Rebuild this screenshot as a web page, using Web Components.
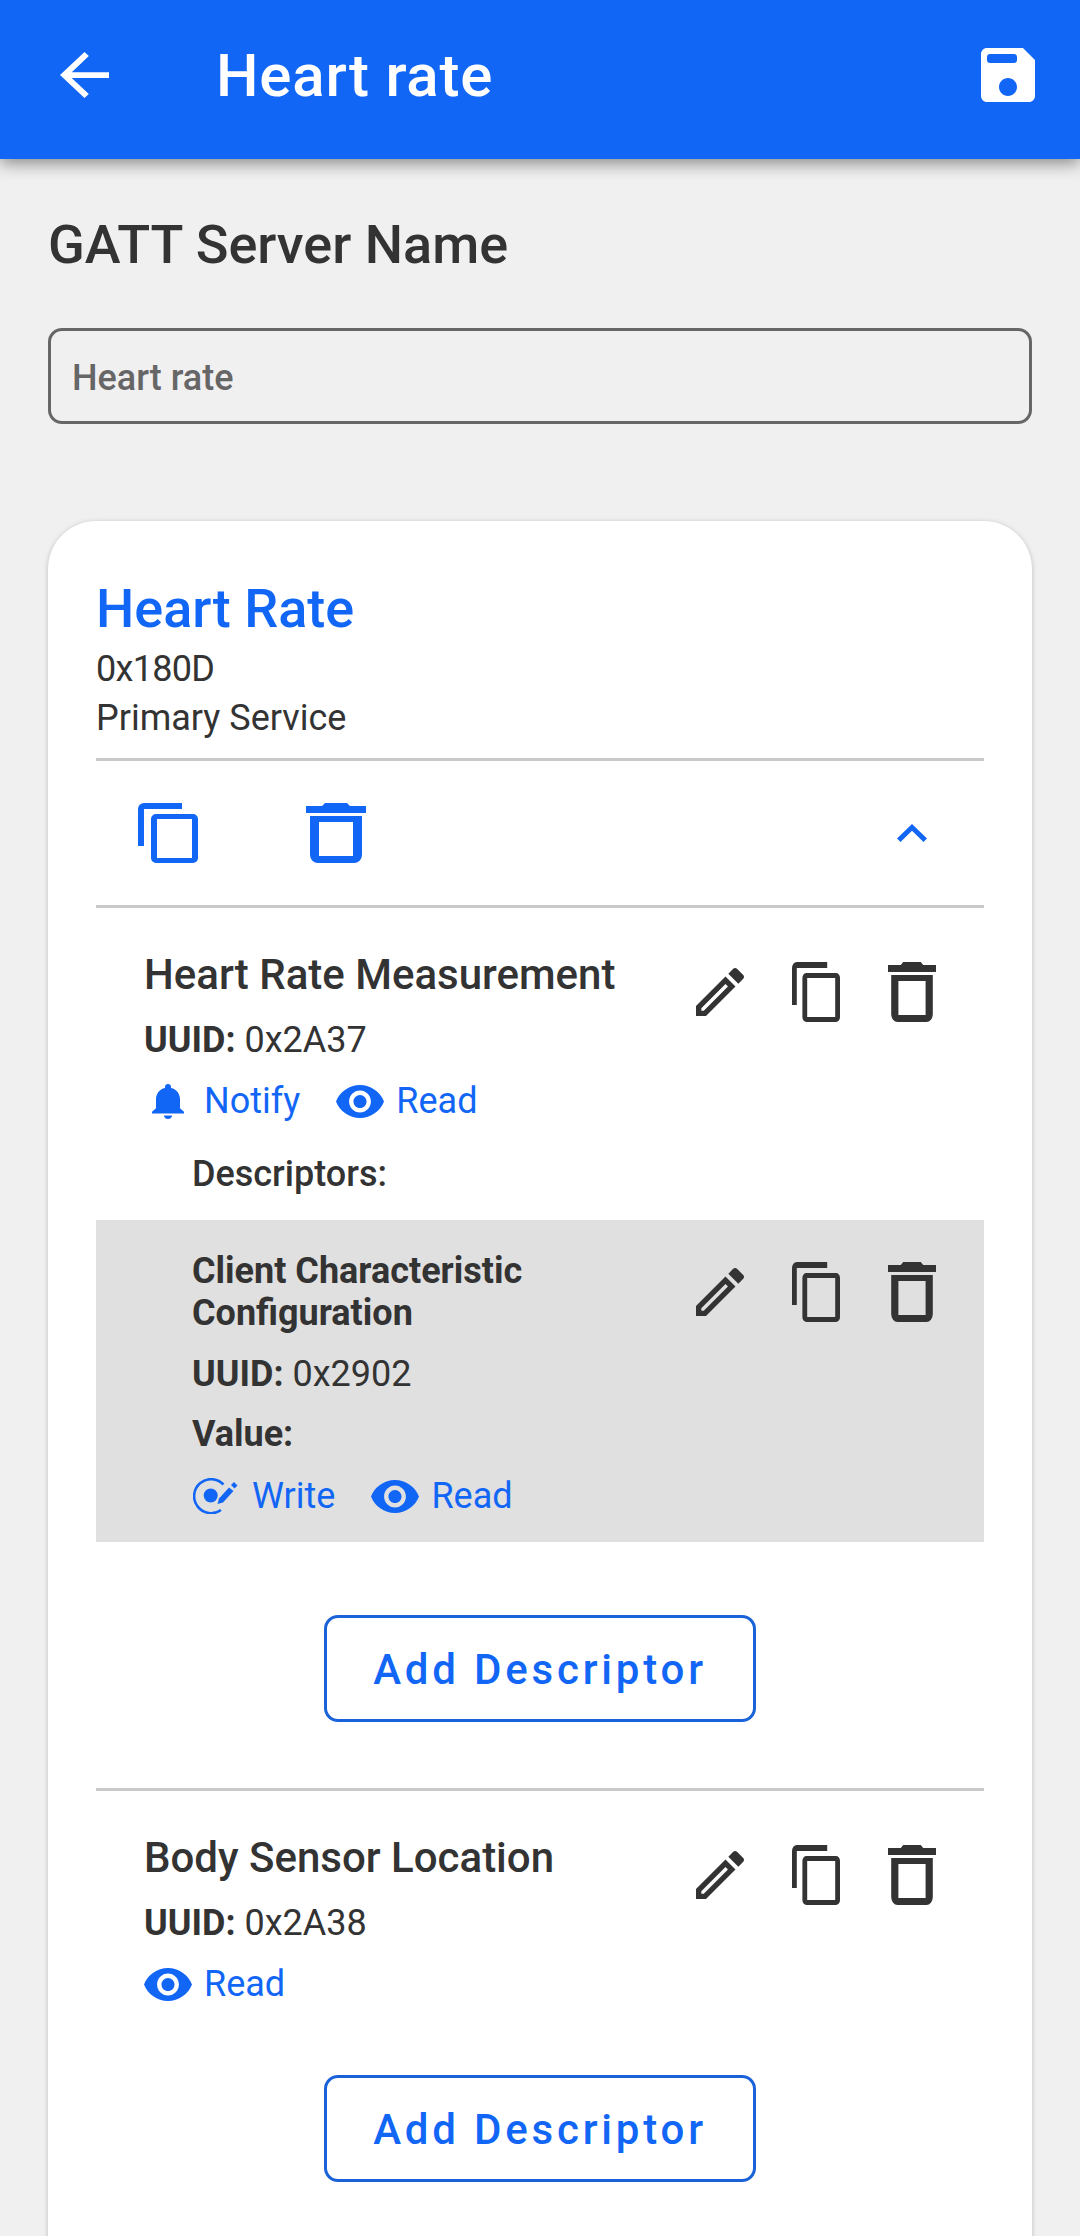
<!DOCTYPE html>
<html lang="en">
<head>
<meta charset="UTF-8">
<title>Heart rate</title>
<style>
html, body { margin: 0; height: 2236px; overflow: hidden; }
body {
  background: #f1f0f1;
  color: #333333;
  font-family: "Roboto", "Liberation Sans", sans-serif;
}
</style>
</head>
<body>
<app-bar>Heart rate</app-bar>
<server-name label="GATT Server Name">Heart rate</server-name>
<service-card>
  <span slot="name">Heart Rate</span>
  <span slot="uuid">0x180D</span>
  <span slot="kind">Primary Service</span>

  <gatt-char>
    <span slot="name">Heart Rate Measurement</span>
    <uuid-line slot="uuid">0x2A37</uuid-line>
    <prop-tag slot="props" icon="bell">Notify</prop-tag>
    <prop-tag slot="props" icon="eye">Read</prop-tag>
    <gatt-desc slot="descriptors">
      <span slot="name">Client Characteristic Configuration</span>
      <uuid-line slot="uuid">0x2902</uuid-line>
      <prop-tag slot="props" icon="write">Write</prop-tag>
      <prop-tag slot="props" icon="eye">Read</prop-tag>
    </gatt-desc>
  </gatt-char>

  <gatt-char last>
    <span slot="name">Body Sensor Location</span>
    <uuid-line slot="uuid">0x2A38</uuid-line>
    <prop-tag slot="props" icon="eye">Read</prop-tag>
  </gatt-char>
</service-card>

<script>
const ICONS = {
  back: { box: "4 4 16 16", d: "M20 11H7.83l5.59-5.59L12 4l-8 8 8 8 1.41-1.41L7.83 13H20v-2z" },
  save: { box: "3 3 18 18", d: "M17 3H5c-1.11 0-2 .9-2 2v14c0 1.1.89 2 2 2h14c1.1 0 2-.9 2-2V7l-4-4zM12 19c-1.66 0-3-1.34-3-3s1.34-3 3-3 3 1.34 3 3-1.34 3-3 3zM15 7c0 .6-.4 1-1 1H6c-.6 0-1-.4-1-1V6c0-.6.4-1 1-1h8c.6 0 1 .4 1 1v1z" },
  copy: { box: "0 0 60 60", d: "M44 0H6a6 6 0 0 0-6 6V43h6V6H44zM18 11H55a5 5 0 0 1 5 5V55a5 5 0 0 1-5 5H18a5 5 0 0 1-5-5V16a5 5 0 0 1 5-5zM19 16V55H54V16z" },
  trash: { box: "0 0 60 60", d: "M16 3L19 0H41L44 3H60V10H0V3zM4 13H56V52a8 8 0 0 1-8 8H12a8 8 0 0 1-8-8zM13 19V53H47V19z" },
  edit: { box: "3 3 18 18", d: "M3 17.25V21h3.75L17.81 9.94l-3.75-3.75L3 17.25zM5.92 19H5v-.92l9.06-9.06.92.92L5.92 19zM20.71 5.63l-2.34-2.34c-.2-.2-.45-.29-.71-.29s-.51.1-.7.29l-1.83 1.83 3.75 3.75 1.83-1.83c.39-.39.39-1.02 0-1.41z" },
  up: { box: "6 8 12 7.41", d: "M12 8l-6 6 1.41 1.41L12 10.83l4.59 4.58L18 14z" },
  bell: { box: "4 2.5 16 19.5", d: "M12 22c1.1 0 2-.9 2-2h-4c0 1.1.89 2 2 2zm6-6v-5c0-3.07-1.64-5.64-4.5-6.32V4c0-.83-.67-1.5-1.5-1.5s-1.5.67-1.5 1.5v.68C7.63 5.36 6 7.92 6 11v5l-2 2v1h16v-1l-2-2z" },
  eye: { box: "1 4.5 22 15", d: "M12 4.5C7 4.5 2.73 7.61 1 12c1.73 4.39 6 7.5 11 7.5s9.27-3.11 11-7.5c-1.73-4.39-6-7.5-11-7.5zM12 17c-2.76 0-5-2.24-5-5s2.24-5 5-5 5 2.24 5 5-2.24 5-5 5zm0-8c-1.66 0-3 1.34-3 3s1.34 3 3 3 3-1.34 3-3-1.34-3-3-3z" }
};

class UiIcon extends HTMLElement {
  connectedCallback() {
    const name = this.getAttribute("name");
    const w = this.getAttribute("w") || 48;
    const h = this.getAttribute("h") || 48;
    const style = `<style>:host { display: block; width: ${w}px; height: ${h}px; flex: none; } svg { display: block; width: 100%; height: 100%; fill: currentColor; }</style>`;
    const root = this.shadowRoot || this.attachShadow({ mode: "open" });
    if (name === "write") {
      root.innerHTML = style + `<svg viewBox="0 0 47 36" preserveAspectRatio="none">
        <path d="M30.5 6.5A17 17 0 1 0 28 32" fill="none" stroke="currentColor" stroke-width="2.6"/>
        <circle cx="17.7" cy="17.5" r="7"/>
        <path d="M24.5 26l1.5-5.5L36 9.5l4.5 3.5L30 24.5z"/>
        <path d="M38 7l3-3 3.5 3.5-3 3z"/>
      </svg>`;
    } else {
      const icon = ICONS[name];
      root.innerHTML = style + `<svg viewBox="${icon.box}" preserveAspectRatio="none"><path fill-rule="evenodd" d="${icon.d}"/></svg>`;
    }
  }
}
customElements.define("ui-icon", UiIcon);

const appBarTemplate = document.createElement("template");
appBarTemplate.innerHTML = `
<style>
:host {
  display: flex;
  align-items: center;
  position: relative;
  box-sizing: border-box;
  height: 159px;
  padding: 0 45px 9px 60px;
  background: #1266f6;
  color: #ffffff;
  box-shadow: 0 4px 16px rgba(0, 0, 0, 0.45);
}
.title {
  flex: 1;
  margin-left: 107px;
  padding-top: 2px;
  font-size: 60px;
  font-weight: 500;
  letter-spacing: 0.8px;
  line-height: 70px;
}
</style>
<ui-icon name="back" w="49" h="46"></ui-icon>
<div class="title"><slot></slot></div>
<ui-icon name="save" w="54" h="54"></ui-icon>
`;
customElements.define("app-bar", class extends HTMLElement {
  constructor() {
    super().attachShadow({ mode: "open" }).appendChild(appBarTemplate.content.cloneNode(true));
  }
});

const serverNameTemplate = document.createElement("template");
serverNameTemplate.innerHTML = `
<style>
:host { display: block; padding: 54px 48px 0; }
.label { font-size: 54px; font-weight: 500; line-height: 64px; color: #333333; }
.field {
  box-sizing: border-box;
  height: 96px;
  margin-top: 51px;
  padding-left: 21px;
  border: 3px solid #666666;
  border-radius: 14px;
  font-size: 36px;
  font-weight: 500;
  line-height: 94px;
  color: #666666;
}
</style>
<div class="label"></div>
<div class="field"><slot></slot></div>
`;
customElements.define("server-name", class extends HTMLElement {
  constructor() {
    super().attachShadow({ mode: "open" }).appendChild(serverNameTemplate.content.cloneNode(true));
  }
  connectedCallback() {
    this.shadowRoot.querySelector(".label").textContent = this.getAttribute("label");
  }
});

const serviceCardTemplate = document.createElement("template");
serviceCardTemplate.innerHTML = `
<style>
:host {
  display: block;
  margin: 97px 48px 0;
  padding: 56px 48px 0;
  background: #ffffff;
  border-radius: 48px;
  box-shadow: 0 1px 5px rgba(0, 0, 0, 0.22);
}
.name { font-size: 54px; font-weight: 500; line-height: 64px; color: #1266f6; }
.meta { font-size: 36px; line-height: 48px; color: #333333; }
.uuid { margin-top: 4px; letter-spacing: -0.7px; }
.kind { margin-top: 1px; }
.actions {
  display: flex;
  align-items: center;
  gap: 108px;
  height: 144px;
  margin-top: 16px;
  padding: 0 57px 0 42px;
  border-top: 3px solid #c9c9c9;
  border-bottom: 3px solid #c9c9c9;
  color: #1266f6;
}
.up { margin-left: auto; }
</style>
<div class="name"><slot name="name"></slot></div>
<div class="meta uuid"><slot name="uuid"></slot></div>
<div class="meta kind"><slot name="kind"></slot></div>
<div class="actions">
  <ui-icon name="copy" w="60" h="60"></ui-icon>
  <ui-icon name="trash" w="60" h="60"></ui-icon>
  <ui-icon class="up" name="up" w="30" h="18"></ui-icon>
</div>
<slot></slot>
`;
customElements.define("service-card", class extends HTMLElement {
  constructor() {
    super().attachShadow({ mode: "open" }).appendChild(serviceCardTemplate.content.cloneNode(true));
  }
});

const itemActionsTemplate = document.createElement("template");
itemActionsTemplate.innerHTML = `
<style>
:host { display: flex; gap: 48px; align-items: center; align-self: flex-start; flex: none; color: #333333; }
</style>
<ui-icon name="edit" w="48" h="48"></ui-icon>
<ui-icon name="copy" w="48" h="60"></ui-icon>
<ui-icon name="trash" w="48" h="60"></ui-icon>
`;
customElements.define("item-actions", class extends HTMLElement {
  constructor() {
    super().attachShadow({ mode: "open" }).appendChild(itemActionsTemplate.content.cloneNode(true));
  }
});

const uuidTemplate = document.createElement("template");
uuidTemplate.innerHTML = `
<style>
:host { display: block; font-size: 36px; line-height: 48px; color: #333333; }
b { font-weight: 700; }
</style>
<b>UUID:</b> <slot></slot>
`;
customElements.define("uuid-line", class extends HTMLElement {
  constructor() {
    super().attachShadow({ mode: "open" }).appendChild(uuidTemplate.content.cloneNode(true));
  }
});

const propTemplate = document.createElement("template");
propTemplate.innerHTML = `
<style>
:host {
  display: flex;
  align-items: center;
  gap: 12px;
  font-size: 36px;
  line-height: 48px;
  color: #1266f6;
}
.box { display: flex; justify-content: center; width: 48px; }
</style>
<div class="box"></div>
<slot></slot>
`;
customElements.define("prop-tag", class extends HTMLElement {
  constructor() {
    super().attachShadow({ mode: "open" }).appendChild(propTemplate.content.cloneNode(true));
  }
  connectedCallback() {
    const name = this.getAttribute("icon");
    const size = { bell: [32, 35], eye: [48, 33], write: [47, 36] }[name];
    const icon = document.createElement("ui-icon");
    icon.setAttribute("name", name);
    icon.setAttribute("w", size[0]);
    icon.setAttribute("h", size[1]);
    this.shadowRoot.querySelector(".box").replaceChildren(icon);
  }
});

const descTemplate = document.createElement("template");
descTemplate.innerHTML = `
<style>
:host {
  display: flex;
  justify-content: space-between;
  padding: 30px 48px 22px 96px;
  background: #e0e0e0;
  font-size: 36px;
  color: #333333;
}
.name { width: 440px; font-weight: 700; line-height: 42px; }
item-actions { margin-top: 12px; }
.uuid { margin-top: 16px; }
.value { margin-top: 12px; font-weight: 700; line-height: 48px; }
.props { display: flex; gap: 36px; margin-top: 14px; }
</style>
<div class="text">
  <div class="name"><slot name="name"></slot></div>
  <div class="uuid"><slot name="uuid"></slot></div>
  <div class="value">Value:</div>
  <div class="props"><slot name="props"></slot></div>
</div>
<item-actions></item-actions>
`;
customElements.define("gatt-desc", class extends HTMLElement {
  constructor() {
    super().attachShadow({ mode: "open" }).appendChild(descTemplate.content.cloneNode(true));
  }
});

const addButtonTemplate = document.createElement("template");
addButtonTemplate.innerHTML = `
<style>
:host {
  display: flex;
  align-items: center;
  justify-content: center;
  box-sizing: border-box;
  width: 432px;
  height: 107px;
  margin: 0 auto;
  padding-top: 2px;
  border: 3px solid #1a62d8;
  border-radius: 14px;
  font-size: 42px;
  font-weight: 500;
  letter-spacing: 3.8px;
  color: #1266f6;
}
</style>
<slot></slot>
`;
customElements.define("add-button", class extends HTMLElement {
  constructor() {
    super().attachShadow({ mode: "open" }).appendChild(addButtonTemplate.content.cloneNode(true));
  }
});

const charTemplate = document.createElement("template");
charTemplate.innerHTML = `
<style>
:host { display: block; padding-top: 39px; padding-bottom: 66px; border-bottom: 3px solid #c9c9c9; }
:host([last]) { border-bottom: 0; padding-bottom: 140px; }
.head { display: flex; justify-content: space-between; padding: 0 48px; }
.name { font-size: 42px; font-weight: 500; line-height: 56px; color: #333333; white-space: nowrap; }
item-actions { margin-top: 15px; }
.uuid { margin-top: 13px; }
.props { display: flex; gap: 36px; margin-top: 13px; }
.title {
  margin-top: 25px;
  padding: 0 0 22px 96px;
  font-size: 36px;
  font-weight: 500;
  line-height: 48px;
  color: #333333;
}
.add { margin-top: 73px; }
:host([last]) .title, :host([last]) .list { display: none; }
:host([last]) .add { margin-top: 67px; }
</style>
<div class="head">
  <div class="text">
    <div class="name"><slot name="name"></slot></div>
    <div class="uuid"><slot name="uuid"></slot></div>
    <div class="props"><slot name="props"></slot></div>
  </div>
  <item-actions></item-actions>
</div>
<div class="title">Descriptors:</div>
<div class="list"><slot name="descriptors"></slot></div>
<add-button class="add">Add Descriptor</add-button>
`;
customElements.define("gatt-char", class extends HTMLElement {
  constructor() {
    super().attachShadow({ mode: "open" }).appendChild(charTemplate.content.cloneNode(true));
  }
});
</script>
</body>
</html>
